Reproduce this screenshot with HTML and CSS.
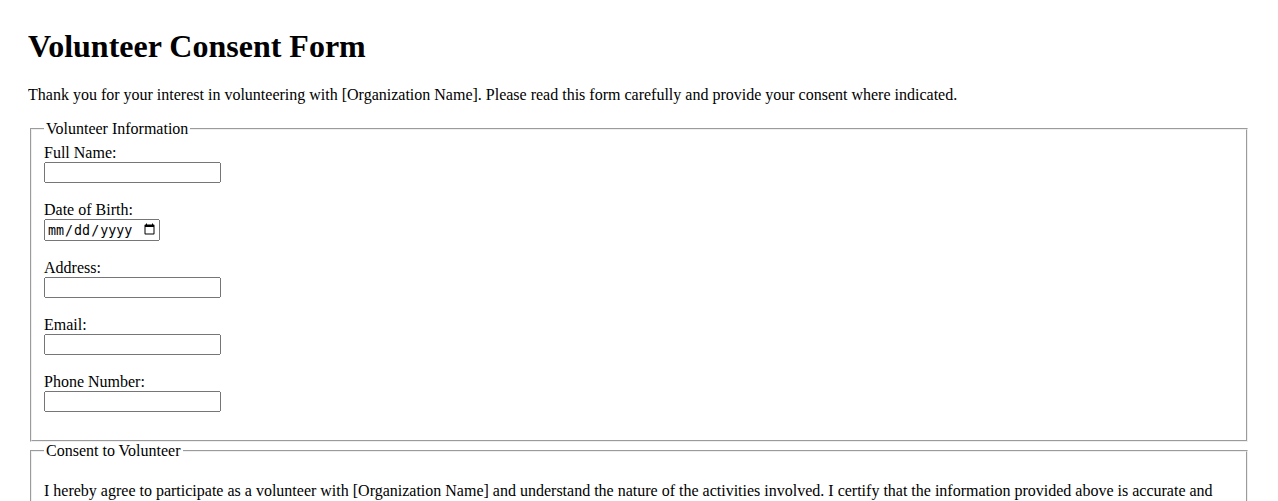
FILE: index.html
```html
<!DOCTYPE html>
<html lang="en">
<head>
    <meta charset="UTF-8">
    <meta name="viewport" content="width=device-width, initial-scale=1.0">
    <title>Volunteer Consent Form</title>
    <link rel="stylesheet" href="styles.css">
</head>
<body>
    <h1>Volunteer Consent Form</h1>
    <p>Thank you for your interest in volunteering with [Organization Name]. Please read this form carefully and provide your consent where indicated.</p>

    <form>
        <fieldset>
            <legend>Volunteer Information</legend>
            <label for="fullname">Full Name:</label><br>
            <input type="text" id="fullname" name="fullname"><br><br>

            <label for="dob">Date of Birth:</label><br>
            <input type="date" id="dob" name="dob"><br><br>

            <label for="address">Address:</label><br>
            <input type="text" id="address" name="address"><br><br>

            <label for="email">Email:</label><br>
            <input type="email" id="email" name="email"><br><br>

            <label for="phone">Phone Number:</label><br>
            <input type="tel" id="phone" name="phone"><br><br>
        </fieldset>

        <fieldset>
            <legend>Consent to Volunteer</legend>
            <p>I hereby agree to participate as a volunteer with [Organization Name] and understand the nature of the activities involved. I certify that the information provided above is accurate and complete to the best of my knowledge.</p>
            <input type="checkbox" id="agree" name="agree">
            <label for="agree">I agree to the terms above.</label><br><br>
        </fieldset>
    </form>
</body>
</html>
```

FILE: styles.css
```css
body {
    font-family: "Liberation Serif", "Times New Roman", serif;
    margin: 7px 28px 8px;
    color: #000;
    background: #fff;
}

h1 {
    font-size: 2em;
    margin: 0.67em 0 20.4px;
}

fieldset {
    padding-top: 6.6px;
}

input[type="text"],
input[type="email"],
input[type="tel"] {
    box-sizing: border-box;
    width: 177px;
}

input[type="date"] {
    box-sizing: border-box;
    width: 116px;
}
```
